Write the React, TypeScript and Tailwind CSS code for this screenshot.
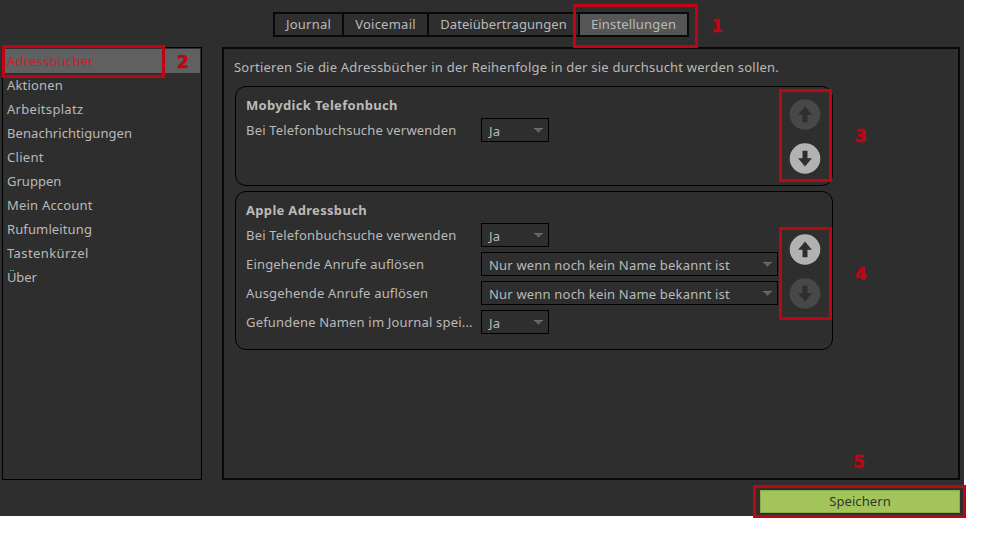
import type { ReactNode } from 'react';

const sidebarItems: [string, string][] = [
  ['Adressbücher', 'text-[#c8202a] tracking-[0.22px]'],
  ['Aktionen', 'tracking-[0.18px]'],
  ['Arbeitsplatz', 'tracking-[0.3px]'],
  ['Benachrichtigungen', 'tracking-[0.07px]'],
  ['Client', 'tracking-[0.3px]'],
  ['Gruppen', 'tracking-[0.02px]'],
  ['Mein Account', 'tracking-[0.2px]'],
  ['Rufumleitung', 'tracking-[0.12px]'],
  ['Tastenkürzel', 'tracking-[0.4px]'],
  ['Über', 'tracking-[-0.15px]'],
];

function Tab({ className, children }: { className: string; children: ReactNode }) {
  return (
    <button className={`flex h-[21px] items-center justify-center whitespace-nowrap pt-px ${className}`}>
      {children}
    </button>
  );
}

function Select({ value, wide = false }: { value: string; wide?: boolean }) {
  return (
    <div
      className={`flex h-6 items-start justify-between border border-black pl-[7px] pr-[5px] ${
        wide ? 'w-[297px]' : 'w-[68px]'
      }`}
    >
      <span className="mt-px whitespace-nowrap leading-[22px] tracking-[0.19px]">{value}</span>
      <svg className="mt-[9px]" width="9" height="5" viewBox="0 0 9 5">
        <path d="M0 0H9L4.5 5Z" fill="#626262" />
        <path d="M0 0.5H9" stroke="#6e6e6e" />
      </svg>
    </div>
  );
}

function Row({ label, value, wide }: { label: string; value: string; wide?: boolean }) {
  return (
    <div className="flex h-6">
      <span className="w-[235px] whitespace-nowrap leading-6 tracking-[0.18px]">{label}</span>
      <Select value={value} wide={wide} />
    </div>
  );
}

function MoveButton({ down = false, enabled = false }: { down?: boolean; enabled?: boolean }) {
  return (
    <svg width="32" height="31" viewBox="0 0 32 31" className="block">
      <circle cx="16" cy="15.5" r="15.3" fill={enabled ? '#b2b2b2' : '#484848'} />
      <path
        d="M16 7.5L22.9 15.8H18.5V23.2H13.5V15.8H9.1Z"
        fill="#2e2e2e"
        transform={down ? 'rotate(180 16 15.5)' : undefined}
      />
    </svg>
  );
}

function Card({
  title,
  className,
  buttons,
  children,
}: {
  title: string;
  className: string;
  buttons: ReactNode;
  children: ReactNode;
}) {
  return (
    <section className={`flex w-[598px] rounded-[11px] border border-black pl-[10px] ${className}`}>
      <div className="w-[543px] pt-[8px]">
        <h2 className="h-[23px] text-[13px] font-bold leading-5 tracking-[0.32px]">{title}</h2>
        <div className="flex flex-col gap-[5px]">{children}</div>
      </div>
      {buttons}
    </section>
  );
}

function Mark({ className, children }: { className: string; children: ReactNode }) {
  return (
    <span
      className={`absolute font-['DejaVu_Sans',sans-serif] text-[17px] font-bold leading-5 text-[#bf0513] [-webkit-text-stroke:0.6px_#bf0513] ${className}`}
    >
      {children}
    </span>
  );
}

function Frame({ className }: { className: string }) {
  return <div className={`absolute border-3 border-[#bf0513] ${className}`} />;
}

export default function App() {
  return (
    <div className="relative h-[536px] w-[984px] overflow-hidden bg-white font-['Noto_Sans','Liberation_Sans',sans-serif] text-[13px] text-[#bababa]">
      <div className="flex h-[516px] w-[964px] flex-col bg-[#2e2e2e] pt-3">
        <nav className="ml-[273px] flex w-[416px] gap-[2px] border-2 border-[#090909] bg-[#090909]">
          <Tab className="w-[67px] bg-[#2e2e2e] tracking-[0.2px]">Journal</Tab>
          <Tab className="w-[83px] bg-[#2e2e2e] tracking-[0.25px]">Voicemail</Tab>
          <Tab className="w-[149px] bg-[#2e2e2e] tracking-[0.06px]">Dateiübertragungen</Tab>
          <Tab className="w-[107px] bg-[#565656] tracking-[0.17px]">Einstellungen</Tab>
        </nav>

        <div className="mt-[10px] flex h-[433px] gap-5 pl-[2px]">
          <aside className="w-[200px] border border-black p-px">
            <ul>
              {sidebarItems.map(([label, style], index) => (
                <li
                  key={label}
                  className={`h-6 whitespace-nowrap pl-[3px] leading-6 ${style} ${index === 0 ? 'bg-[#606060]' : ''}`}
                >
                  {label}
                </li>
              ))}
            </ul>
          </aside>

          <main className="w-[738px] border-2 border-[#090909] pl-[11px] pt-[8px]">
            <p className="-ml-px h-[29px] whitespace-nowrap leading-5 tracking-[0.22px]">
              Sortieren Sie die Adressbücher in der Reihenfolge in der sie durchsucht werden sollen.
            </p>
            <div className="flex flex-col gap-[5px]">
              <Card
                title="Mobydick Telefonbuch"
                className="h-[100px]"
                buttons={
                  <div className="flex flex-col gap-[13px] pt-[12px]">
                    <MoveButton />
                    <MoveButton down enabled />
                  </div>
                }
              >
                <Row label="Bei Telefonbuchsuche verwenden" value="Ja" />
              </Card>
              <Card
                title="Apple Adressbuch"
                className="h-[159px]"
                buttons={
                  <div className="flex flex-col gap-[13px] pt-[42px]">
                    <MoveButton enabled />
                    <MoveButton down />
                  </div>
                }
              >
                <Row label="Bei Telefonbuchsuche verwenden" value="Ja" />
                <Row label="Eingehende Anrufe auflösen" value="Nur wenn noch kein Name bekannt ist" wide />
                <Row label="Ausgehende Anrufe auflösen" value="Nur wenn noch kein Name bekannt ist" wide />
                <Row label="Gefundene Namen im Journal spei..." value="Ja" />
              </Card>
            </div>
          </main>
        </div>

        <button className="ml-[760px] mt-[10px] flex h-[23px] w-[200px] items-center justify-center border border-[#8bad45] bg-[#a3c45b] text-[#33372a] tracking-[0.08px]">
          Speichern
        </button>
      </div>

      <Frame className="left-[573px] top-[4px] h-[44px] w-[125px]" />
      <Frame className="left-[2px] top-[45px] h-[33px] w-[163px]" />
      <Frame className="left-[779px] top-[89px] h-[93px] w-[53px]" />
      <Frame className="left-[779px] top-[227px] h-[93px] w-[53px]" />
      <Frame className="left-[753px] top-[485px] h-[33px] w-[213px]" />

      <Mark className="left-[711px] top-[16px]">1</Mark>
      <Mark className="left-[177px] top-[52px]">2</Mark>
      <Mark className="left-[855px] top-[126px]">3</Mark>
      <Mark className="left-[855px] top-[264px]">4</Mark>
      <Mark className="left-[853px] top-[452px]">5</Mark>
    </div>
  );
}
